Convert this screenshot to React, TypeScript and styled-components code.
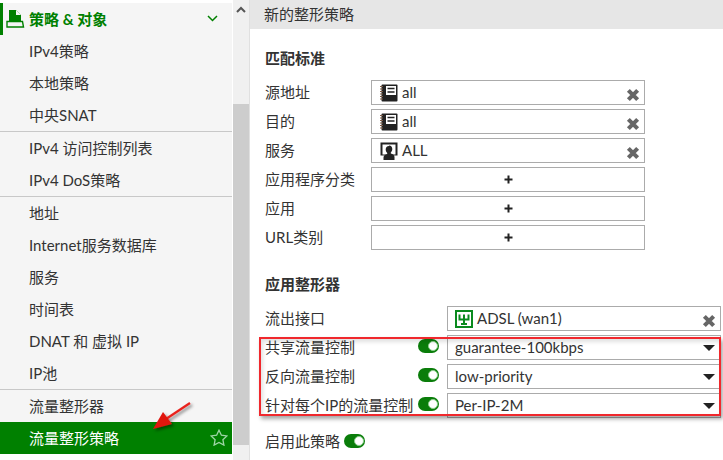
import React from "react";
import styled, { createGlobalStyle } from "styled-components";

const GlobalStyle = createGlobalStyle`
  html, body { margin: 0; padding: 0; background: #fff; }
  body {
    font-family: Lato, "Noto Sans CJK SC", sans-serif;
    font-size: 15px;
    color: #333;
    overflow: hidden;
  }
`;

const Page = styled.div`
  position: relative;
  width: 723px;
  height: 460px;
  display: flex;
  overflow: hidden;
`;

const Sidebar = styled.nav`
  width: 232px;
  height: 451px;
  margin-top: 3px;
  background: #f5f5f5;
  flex: none;
`;

const GroupHeader = styled.div`
  height: 32px;
  box-sizing: border-box;
  border-left: 3px solid #008000;
  padding: 0 14px 2px 3px;
  display: flex;
  align-items: center;
  gap: 4px;
  color: #008000;
  font-weight: 700;
`;

const GroupTitle = styled.span`
  flex: 1;
`;

const MenuGroup = styled.div<{ $last?: boolean }>`
  border-bottom: ${(p) => (p.$last ? "none" : "1px solid #c8c8c8")};
`;

const MenuItem = styled.div<{ $active?: boolean }>`
  height: 32px;
  box-sizing: border-box;
  padding: 0 4px 2px 29px;
  display: flex;
  align-items: center;
  justify-content: space-between;
  background: ${(p) => (p.$active ? "#008000" : "transparent")};
  color: ${(p) => (p.$active ? "#fff" : "#333")};
`;

const Scrollbar = styled.div`
  width: 16px;
  margin-left: 1px;
  background: #f0f0f0;
  flex: none;
  display: flex;
  flex-direction: column;
  align-items: center;
`;

const ScrollArrow = styled.svg`
  margin-top: 6px;
  width: 10px;
  height: 7px;
`;

const ScrollThumb = styled.div`
  margin-top: 91px;
  width: 100%;
  height: 341px;
  background: #cdcdcd;
`;

const Main = styled.main`
  flex: 1;
  min-width: 0;
  border-left: 1px solid #e0e0e0;
`;

const Header = styled.div`
  height: 29px;
  padding-left: 14px;
  background: #e6e6e6;
  line-height: 29px;
`;

const Body = styled.div`
  padding: 19px 2px 0 15px;
`;

const SectionTitle = styled.h3<{ $spaced?: boolean }>`
  margin: ${(p) => (p.$spaced ? "24px" : "0")} 0 12px;
  height: 20px;
  line-height: 20px;
  font-size: 15px;
  font-weight: 700;
  color: #333;
`;

const Rows = styled.div`
  display: flex;
  flex-direction: column;
  gap: 4px;
`;

const Row = styled.div`
  display: flex;
  align-items: center;
  height: 25px;
`;

const Label = styled.div`
  width: 106px;
  flex: none;
  padding-bottom: 3px;
`;

const WideLabel = styled.div`
  width: 182px;
  flex: none;
  display: flex;
  align-items: center;
  justify-content: space-between;
  padding: 0 8px 3px 0;
  box-sizing: border-box;
  white-space: nowrap;
`;

const Field = styled.div<{ $center?: boolean; $select?: boolean }>`
  width: 274px;
  height: 25px;
  box-sizing: border-box;
  border: 1px solid #ababab;
  padding: 0 8px 0 ${(p) => (p.$select ? "7px" : "8px")};
  display: flex;
  align-items: center;
  gap: 4px;
  justify-content: ${(p) => (p.$center ? "center" : "flex-start")};
  background: #fff;
`;

const FieldText = styled.span`
  flex: 1;
  line-height: 23px;
`;

const Plus = styled.svg`
  width: 9px;
  height: 9px;
`;

const Cross = styled.svg`
  width: 14px;
  height: 14px;
  margin: 4px -4px 0 0;
`;

const Caret = styled.div`
  width: 0;
  height: 0;
  margin: 0 -3px 0 0;
  border-left: 6px solid transparent;
  border-right: 6px solid transparent;
  border-top: 6px solid #222;
`;

const Toggle = styled.div`
  width: 21px;
  height: 14px;
  box-sizing: border-box;
  border-radius: 7px;
  background: #0a7d0a;
  display: flex;
  justify-content: flex-end;
  align-items: center;
  padding-right: 1px;
  flex: none;
  &::after {
    content: "";
    width: 10px;
    height: 10px;
    border-radius: 50%;
    background: #fff;
    border: 1px solid #8ccf8c;
    box-sizing: border-box;
  }
`;

const EnableRow = styled.div`
  display: flex;
  align-items: center;
  gap: 4px;
  margin-top: 10px;
  height: 25px;
`;

const Highlight = styled.div`
  position: absolute;
  left: 259px;
  top: 337px;
  width: 458px;
  height: 75px;
  border: 2px solid #f0282d;
  box-shadow: 2px 3px 4px rgba(0, 0, 0, 0.35), inset 2px 3px 4px rgba(0, 0, 0, 0.12);
  pointer-events: none;
`;

const ArrowOverlay = styled.svg`
  position: absolute;
  left: 150px;
  top: 398px;
  width: 45px;
  height: 36px;
  overflow: visible;
`;

const BookIcon = () => (
  <svg width="18" height="18" viewBox="0 0 18 18">
    <rect x="1.500" y="0.500" width="16" height="17" rx="1" fill="#222" />
    <rect x="6" y="2" width="10" height="9" fill="#fff" />
    <path d="M7.500 4.500h7M7.500 8h7" stroke="#222" strokeWidth="1.600" />
    <path d="M0 2.500h3M0 5h3M0 7.500h3M0 10h3M0 12.500h3M0 15h3" stroke="#7a5a45" strokeWidth="1" />
  </svg>
);

const ServiceIcon = () => (
  <svg width="18" height="18" viewBox="0 0 18 18">
    <rect x="0.500" y="0.500" width="17" height="13" fill="#222" />
    <rect x="2.500" y="2.500" width="13" height="10" fill="#fff" />
    <path d="M9 3.500c2.200 0 3.300 1.600 3.300 3.500 0 1.500-.7 2.700-1.500 3.400v1.100c2 .500 3.700 1.500 3.700 3.500V18h-11v-2.500c0-2 1.700-3 3.700-3.500v-1.100c-.8-.7-1.500-1.900-1.500-3.400 0-1.900 1.100-3.500 3.300-3.500z" fill="#222" />
  </svg>
);

const PortIcon = () => (
  <svg width="18" height="18" viewBox="0 0 18 18">
    <rect x="1" y="1" width="16" height="16" fill="#fff" stroke="#0a8a1e" strokeWidth="2" />
    <path d="M4.500 4.500v5h9v-5M9 4.500v9.500M6 14h6" fill="none" stroke="#0a8a1e" strokeWidth="2" />
  </svg>
);

const PolicyIcon = () => (
  <svg width="19" height="19" viewBox="0 0 19 19">
    <path d="M3 1h7l5 5v7H3z" fill="#008000" />
    <path d="M10 1v5h5" fill="#f5f5f5" />
    <path d="M1 12.500h15.500l1 5.500H1z" fill="#f5f5f5" stroke="#008000" strokeWidth="1.400" />
  </svg>
);

const Chevron = () => (
  <svg width="11" height="7" viewBox="0 0 11 7">
    <path d="M1 1l4.500 4.500L10 1" fill="none" stroke="#008000" strokeWidth="1.500" />
  </svg>
);

const Star = () => (
  <svg width="18" height="17" viewBox="0 0 18 17">
    <path
      d="M9 1.200l2.400 5 5.500.700-4 3.800 1 5.400L9 13.500l-4.900 2.600 1-5.400-4-3.800 5.500-.700z"
      fill="none"
      stroke="#9fd6a6"
      strokeWidth="1.300"
    />
  </svg>
);

const CrossIcon = () => (
  <Cross viewBox="0 0 13 13">
    <path d="M2.200 2.200l8.600 8.600M10.800 2.200l-8.600 8.600" stroke="#666" strokeWidth="3.800" />
  </Cross>
);

const PlusIcon = () => (
  <Plus viewBox="0 0 9 9">
    <path d="M4.500 0.500v8M0.500 4.500h8" stroke="#222" strokeWidth="2" />
  </Plus>
);

const menuGroups = [
  ["IPv4策略", "本地策略", "中央SNAT"],
  ["IPv4 访问控制列表", "IPv4 DoS策略"],
  ["地址", "Internet服务数据库", "服务", "时间表", "DNAT 和 虚拟 IP", "IP池"],
];

const matchRows = [
  { label: "源地址", icon: <BookIcon />, value: "all" },
  { label: "目的", icon: <BookIcon />, value: "all" },
  { label: "服务", icon: <ServiceIcon />, value: "ALL" },
  { label: "应用程序分类" },
  { label: "应用" },
  { label: "URL类别" },
];

const shaperRows = [
  { label: "共享流量控制", value: "guarantee-100kbps" },
  { label: "反向流量控制", value: "low-priority" },
  { label: "针对每个IP的流量控制", value: "Per-IP-2M" },
];

export default function App() {
  return (
    <Page>
      <GlobalStyle />
      <Sidebar>
        <GroupHeader>
          <PolicyIcon />
          <GroupTitle>策略 &amp; 对象</GroupTitle>
          <Chevron />
        </GroupHeader>
        {menuGroups.map((items, i) => (
          <MenuGroup key={i}>
            {items.map((item) => (
              <MenuItem key={item}>{item}</MenuItem>
            ))}
          </MenuGroup>
        ))}
        <MenuGroup $last>
          <MenuItem>流量整形器</MenuItem>
          <MenuItem $active>
            流量整形策略
            <Star />
          </MenuItem>
        </MenuGroup>
      </Sidebar>
      <Scrollbar>
        <ScrollArrow viewBox="0 0 10 7">
          <path d="M1 6l4-4 4 4" fill="none" stroke="#555" strokeWidth="2" />
        </ScrollArrow>
        <ScrollThumb />
      </Scrollbar>
      <Main>
        <Header>新的整形策略</Header>
        <Body>
          <SectionTitle>匹配标准</SectionTitle>
          <Rows>
            {matchRows.map((row) => (
              <Row key={row.label}>
                <Label>{row.label}</Label>
                {row.value ? (
                  <Field>
                    {row.icon}
                    <FieldText>{row.value}</FieldText>
                    <CrossIcon />
                  </Field>
                ) : (
                  <Field $center>
                    <PlusIcon />
                  </Field>
                )}
              </Row>
            ))}
          </Rows>
          <SectionTitle $spaced>应用整形器</SectionTitle>
          <Rows>
            <Row>
              <WideLabel>流出接口</WideLabel>
              <Field $select>
                <PortIcon />
                <FieldText>ADSL (wan1)</FieldText>
                <CrossIcon />
              </Field>
            </Row>
            {shaperRows.map((row) => (
              <Row key={row.label}>
                <WideLabel>
                  {row.label}
                  <Toggle />
                </WideLabel>
                <Field $select>
                  <FieldText>{row.value}</FieldText>
                  <Caret />
                </Field>
              </Row>
            ))}
          </Rows>
          <EnableRow>
            启用此策略
            <Toggle />
          </EnableRow>
        </Body>
      </Main>
      <Highlight />
      <ArrowOverlay viewBox="0 0 45 36">
        <defs>
          <filter id="arrowShadow" x="-30%" y="-30%" width="160%" height="160%">
            <feDropShadow dx="2" dy="2" stdDeviation="1.500" floodColor="#000" floodOpacity="0.450" />
          </filter>
        </defs>
        <g filter="url(#arrowShadow)">
          <path d="M40 5L16 21" stroke="#e8231f" strokeWidth="2.200" fill="none" />
          <path d="M3 31L13 14l9 12z" fill="#e0140f" />
        </g>
      </ArrowOverlay>
    </Page>
  );
}
